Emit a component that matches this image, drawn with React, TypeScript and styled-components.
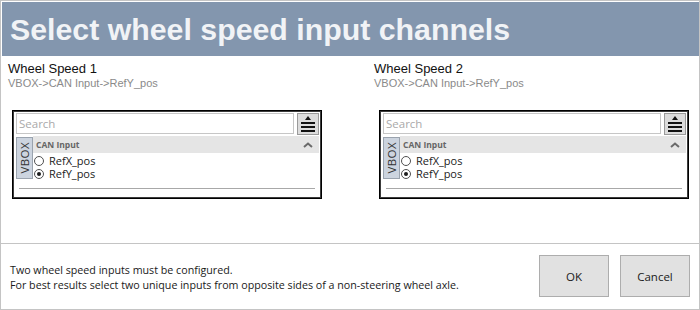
import React from 'react';
import styled, { createGlobalStyle } from 'styled-components';

const GlobalStyle = createGlobalStyle`
    html, body {
        margin: 0;
        padding: 0;
        background: #ffffff;
    }
`;

const UI_FONT = `'Open Sans', 'Noto Sans', sans-serif`;
const ARIAL = `'Liberation Sans', Arial, sans-serif`;

const Window = styled.div`
    width: 700px;
    height: 310px;
    box-sizing: border-box;
    border: 1px solid #c4c4c4;
    display: flex;
    flex-direction: column;
    background: #ffffff;
    overflow: hidden;
`;

const Header = styled.div`
    height: 54px;
    margin: 1px 0 0 1px;
    background: #8396ae;
    display: flex;
    align-items: center;
    padding-left: 8px;
`;

const Title = styled.h1`
    margin: 0;
    font-family: ${ARIAL};
    font-weight: 700;
    font-size: 30.3px;
    color: #f1f3f6;
    line-height: 1;
    padding-top: 2px;
`;

const Content = styled.div`
    flex: 1;
    display: grid;
    grid-template-columns: 316px 316px;
    column-gap: 50px;
    padding: 5px 0 0 7px;
`;

const Column = styled.div`
    display: flex;
    flex-direction: column;
`;

const ChannelName = styled.div`
    font-family: ${ARIAL};
    font-size: 13px;
    line-height: 16px;
    color: #111111;
`;

const ChannelPath = styled.div`
    font-family: ${ARIAL};
    font-size: 11px;
    line-height: 13px;
    color: #8a8a8a;
`;

const Picker = styled.div<{ $inset: number }>`
    margin: 20px 0 0 ${(p) => p.$inset}px;
    width: 310px;
    height: 89px;
    box-sizing: border-box;
    border: 1px solid #000000;
    box-shadow: inset 0 0 0 1px #3c3c3c;
    padding: 2px 2px 0 3px;
    display: flex;
    flex-direction: column;
`;

const SearchRow = styled.div`
    display: flex;
    gap: 3px;
    height: 22px;
`;

const SearchInput = styled.div`
    flex: 1;
    height: 21px;
    box-sizing: border-box;
    border: 1px solid #c6c6c6;
    font-family: ${UI_FONT};
    font-size: 11.5px;
    color: #a9a9a9;
    display: flex;
    align-items: center;
    padding-left: 2px;
`;

const MenuButton = styled.div`
    width: 22px;
    height: 22px;
    box-sizing: border-box;
    border: 1px solid #9a9a9a;
    background: #dcdcdc;
    display: flex;
    align-items: center;
    justify-content: center;
`;

const GroupArea = styled.div`
    display: flex;
    margin-top: 1px;
`;

const SideTab = styled.div`
    width: 17px;
    height: 42px;
    margin-top: 1px;
    box-sizing: border-box;
    border: 1px solid #9aa3ae;
    background: #ccd4df;
    display: flex;
    align-items: center;
    justify-content: center;
`;

const SideTabLabel = styled.span`
    writing-mode: vertical-rl;
    transform: rotate(180deg);
    font-family: ${UI_FONT};
    font-size: 11.5px;
    line-height: 14px;
    color: #333333;
    letter-spacing: 0.4px;
`;

const Group = styled.div`
    flex: 1;
    display: flex;
    flex-direction: column;
`;

const GroupHeader = styled.div`
    height: 17px;
    background: #e5e5e5;
    display: flex;
    align-items: center;
    justify-content: space-between;
    padding: 0 6px 0 3px;
    font-family: ${UI_FONT};
    font-size: 8.5px;
    font-weight: 700;
    color: #666666;
`;

const Options = styled.div`
    display: flex;
    flex-direction: column;
    padding: 1px 0 0 1px;
`;

const Option = styled.label`
    height: 13px;
    line-height: 13px;
    display: flex;
    align-items: center;
    gap: 5px;
    font-family: ${UI_FONT};
    font-size: 11px;
    color: #222222;
`;

const Radio = styled.span<{ $checked: boolean }>`
    width: 10px;
    height: 10px;
    box-sizing: border-box;
    border-radius: 50%;
    border: 1px solid #505050;
    background: #ffffff;
    display: flex;
    align-items: center;
    justify-content: center;
    &::after {
        content: '';
        width: 4px;
        height: 4px;
        border-radius: 50%;
        background: ${(p) => (p.$checked ? '#1c1c1c' : 'transparent')};
    }
`;

const Divider = styled.div`
    margin: 8px 4px 0 3px;
    height: 1px;
    background: #a8a8a8;
`;

const Footer = styled.div`
    height: 64px;
    border-top: 1px solid #c4c4c4;
    display: flex;
    align-items: center;
    justify-content: space-between;
    padding: 0 9px 1px 9px;
`;

const Notes = styled.div`
    font-family: ${UI_FONT};
    font-size: 10.7px;
    line-height: 15px;
    color: #1a1a1a;
    padding-top: 4px;
`;

const Buttons = styled.div`
    display: flex;
    gap: 11px;
`;

const DialogButton = styled.div`
    width: 70px;
    height: 42px;
    box-sizing: border-box;
    border: 1px solid #adadad;
    background: #e1e1e1;
    display: flex;
    align-items: center;
    justify-content: center;
    font-family: ${UI_FONT};
    font-size: 11.5px;
    color: #1a1a1a;
`;

const MenuIcon = (): JSX.Element => (
    <svg width="16" height="18" viewBox="0 0 16 18">
        <polygon points="8,1 11,5 5,5" fill="#111" />
        <rect x="1" y="7" width="14" height="2" fill="#111" />
        <rect x="1" y="11" width="14" height="2" fill="#111" />
        <rect x="1" y="15" width="14" height="2" fill="#111" />
    </svg>
);

const Caret = (): JSX.Element => (
    <svg width="10" height="6" viewBox="0 0 10 6">
        <polyline
            points="1,5 5,1.5 9,5"
            fill="none"
            stroke="#6a6a6a"
            strokeWidth="2"
        />
    </svg>
);

type Channel = {
    name: string;
    path: string;
    options: string[];
    selected: string;
    inset: number;
};

const channels: Channel[] = [
    {
        name: 'Wheel Speed 1',
        path: 'VBOX->CAN Input->RefY_pos',
        options: ['RefX_pos', 'RefY_pos'],
        selected: 'RefY_pos',
        inset: 4,
    },
    {
        name: 'Wheel Speed 2',
        path: 'VBOX->CAN Input->RefY_pos',
        options: ['RefX_pos', 'RefY_pos'],
        selected: 'RefY_pos',
        inset: 5,
    },
];

const ChannelPicker = ({ channel }: { channel: Channel }): JSX.Element => (
    <Column>
        <ChannelName>{channel.name}</ChannelName>
        <ChannelPath>{channel.path}</ChannelPath>
        <Picker $inset={channel.inset}>
            <SearchRow>
                <SearchInput>Search</SearchInput>
                <MenuButton>
                    <MenuIcon />
                </MenuButton>
            </SearchRow>
            <GroupArea>
                <SideTab>
                    <SideTabLabel>VBOX</SideTabLabel>
                </SideTab>
                <Group>
                    <GroupHeader>
                        <span>CAN Input</span>
                        <Caret />
                    </GroupHeader>
                    <Options>
                        {channel.options.map((opt) => (
                            <Option key={opt}>
                                <Radio $checked={opt === channel.selected} />
                                {opt}
                            </Option>
                        ))}
                    </Options>
                </Group>
            </GroupArea>
            <Divider />
        </Picker>
    </Column>
);

const App = (): JSX.Element => {
    return (
        <>
            <GlobalStyle />
            <Window>
                <Header>
                    <Title>Select wheel speed input channels</Title>
                </Header>
                <Content>
                    {channels.map((c) => (
                        <ChannelPicker key={c.name} channel={c} />
                    ))}
                </Content>
                <Footer>
                    <Notes>
                        Two wheel speed inputs must be configured.
                        <br />
                        For best results select two unique inputs from opposite
                        sides of a non-steering wheel axle.
                    </Notes>
                    <Buttons>
                        <DialogButton>OK</DialogButton>
                        <DialogButton>Cancel</DialogButton>
                    </Buttons>
                </Footer>
            </Window>
        </>
    );
};

export default App;
